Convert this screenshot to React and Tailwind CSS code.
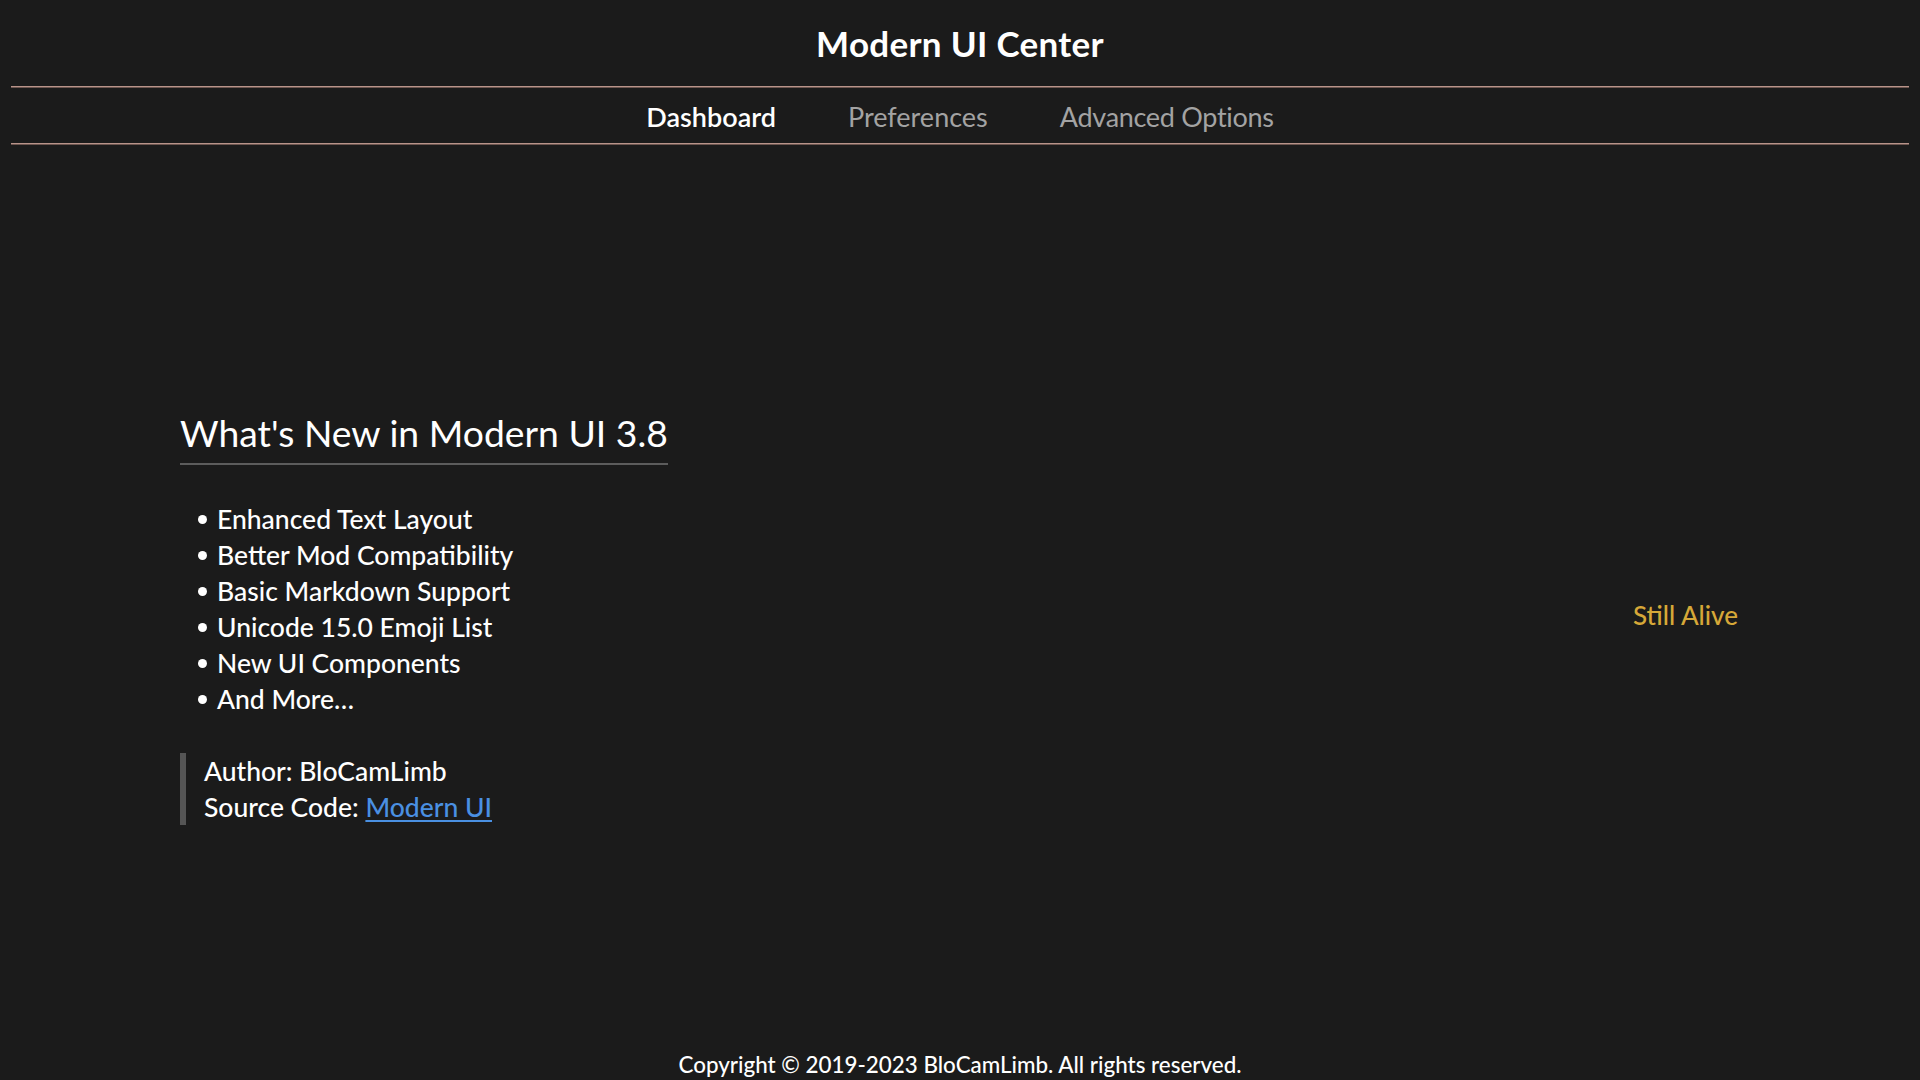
import React from "react";

const font = { fontFamily: "Lato, 'Open Sans', 'Noto Sans', sans-serif" };

export default function App() {
  const items = [
    "Enhanced Text Layout",
    "Better Mod Compatibility",
    "Basic Markdown Support",
    "Unicode 15.0 Emoji List",
    "New UI Components",
    "And More…",
  ];
  return (
    <div
      className="w-[1920px] h-[1080px] bg-[#1b1b1b] text-white flex flex-col overflow-hidden"
      style={font}
    >
      <header className="h-[86px] flex items-center justify-center pt-[1px]">
        <h1 className="text-[35px] font-bold tracking-[0.3px] leading-none">Modern UI Center</h1>
      </header>
      <div className="mx-[11px] h-[2px] bg-[#b8948a] border-b border-[#6e5650]"></div>
      <nav className="h-[55px] flex items-center justify-center gap-[72px] pt-[1px]">
        <span className="text-[27px] text-white font-semibold leading-none">Dashboard</span>
        <span className="text-[27px] text-[#a3a3a3] leading-none">Preferences</span>
        <span className="text-[27px] text-[#a3a3a3] leading-none tracking-[-0.3px]">Advanced Options</span>
      </nav>
      <div className="mx-[11px] h-[2px] bg-[#b8948a] border-b border-[#6e5650]"></div>

      <main className="flex-1 flex items-center pl-[180px] pr-[182px] pt-[40px]">
        <div className="flex-1 flex flex-col">
          <div className="self-start border-b-2 border-[#5c5c5c] pb-[12px]">
            <h2 className="text-[37.3px] leading-none font-normal">What's New in Modern UI 3.8</h2>
          </div>
          <ul className="mt-[36px] flex flex-col">
            {items.map((t) => (
              <li key={t} className="flex items-center h-[36px] text-[26.5px] font-medium leading-none">
                <span className="ml-[18px] mr-[10px] w-[9px] h-[9px] rounded-full bg-white"></span>
                <span>{t}</span>
              </li>
            ))}
          </ul>
          <div className="mt-[36px] flex">
            <div className="w-[6px] bg-[#555555]"></div>
            <div className="pl-[18px] flex flex-col text-[26.5px] font-medium leading-none">
              <div className="h-[36px] flex items-center">Author: BloCamLimb</div>
              <div className="h-[36px] flex items-center">
                Source Code:&nbsp;
                <a href="#" className="text-[#4a90e2] underline underline-offset-[3px]">Modern UI</a>
              </div>
            </div>
          </div>
        </div>
        <div className="text-[26px] text-[#d6a838] font-medium leading-none mt-[-10px]">Still Alive</div>
      </main>

      <footer className="h-[26px] flex items-start justify-center">
        <p className="text-[22.4px] leading-none font-medium">Copyright © 2019-2023 BloCamLimb. All rights reserved.</p>
      </footer>
    </div>
  );
}
